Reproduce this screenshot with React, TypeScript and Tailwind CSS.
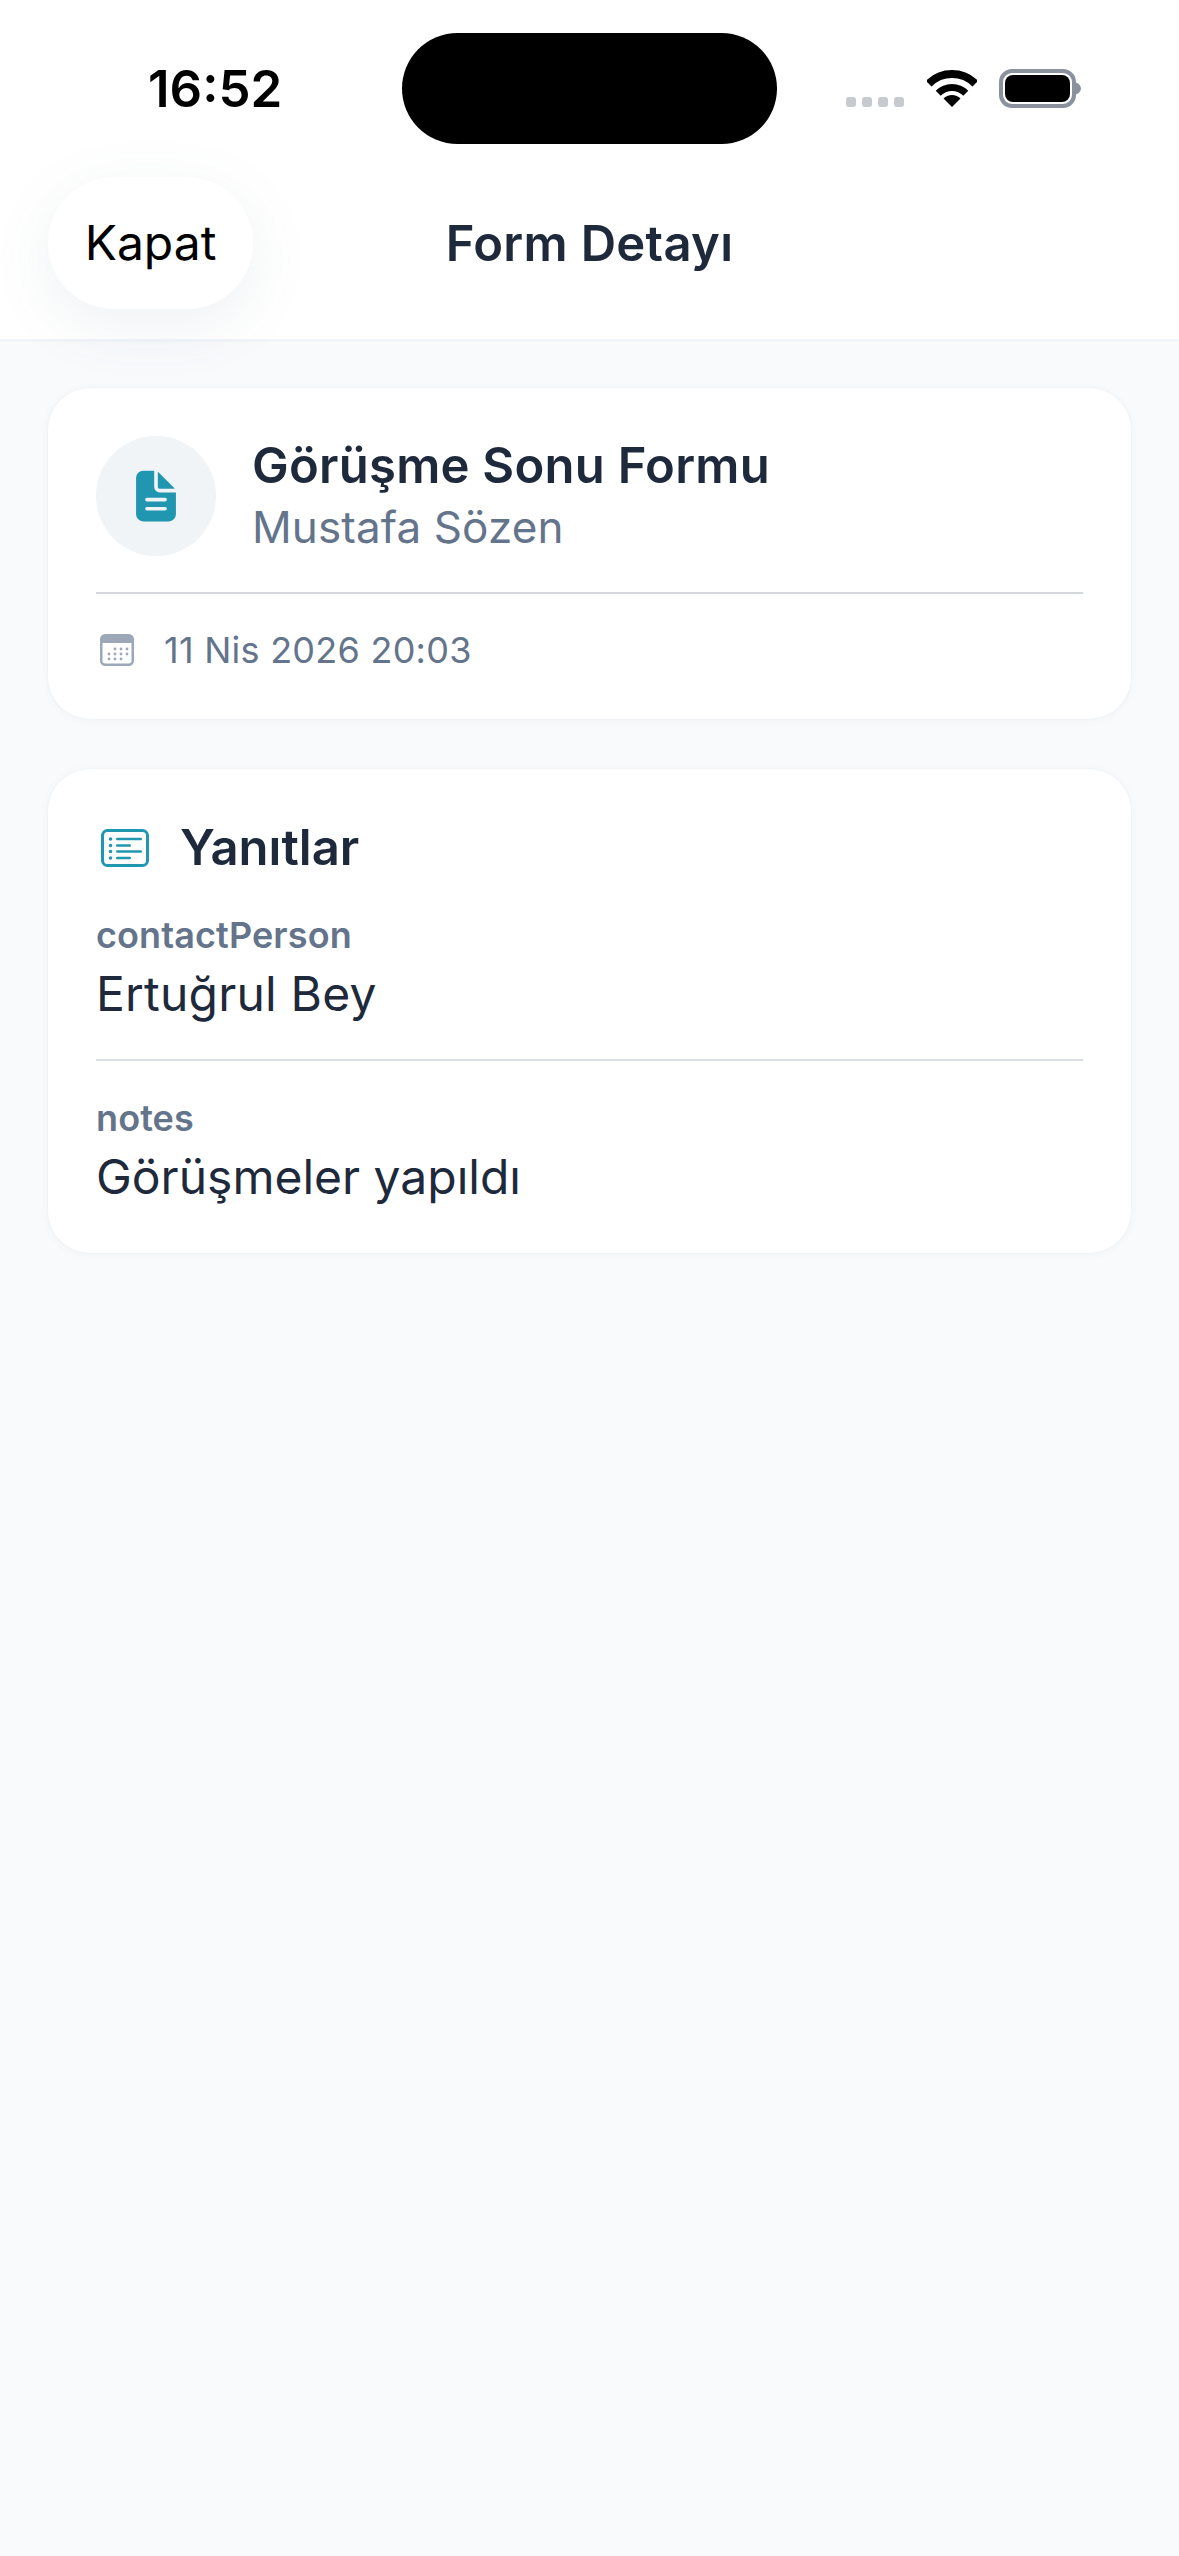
import React from "react";

function Wifi() {
  return (
    <svg width="50" height="37" viewBox="0 0 50 37" fill="none">
      <path d="M1.7 13.7A33 33 0 0 1 48.3 13.7" stroke="#000" strokeWidth="8" />
      <path d="M11.2 23.2A19.5 19.5 0 0 1 38.8 23.2" stroke="#000" strokeWidth="7" />
      <path d="M25 37L16.5 28.5A12 12 0 0 1 33.5 28.5Z" fill="#000" />
    </svg>
  );
}

function Battery() {
  return (
    <svg width="82" height="39" viewBox="0 0 82 39" fill="none">
      <rect x="2" y="2" width="73" height="35" rx="11" stroke="#8b929d" strokeWidth="4" />
      <rect x="6" y="6" width="65" height="27" rx="8" fill="#000" />
      <path d="M77 13.5C80 14.5 82 17 82 19.5C82 22 80 24.5 77 25.5Z" fill="#8b929d" />
    </svg>
  );
}

function DocIcon() {
  return (
    <svg width="58" height="58" viewBox="0 0 512 512" fill="#2196b0">
      <path d="M428 224H288a48 48 0 01-48-48V36a4 4 0 00-4-4h-92a64 64 0 00-64 64v320a64 64 0 0064 64h224a64 64 0 0064-64V228a4 4 0 00-4-4zm-92 160H176a16 16 0 010-32h160a16 16 0 010 32zm0-80H176a16 16 0 010-32h160a16 16 0 010 32z" />
      <path d="M419.22 188.59L275.41 44.78a2 2 0 00-3.41 1.41V176a16 16 0 0016 16h129.81a2 2 0 001.41-3.41z" />
    </svg>
  );
}

function CalendarIcon() {
  const dots: [number, number][] = [
    [15, 15], [21, 15], [27, 15],
    [9, 20], [15, 20], [21, 20], [27, 20],
    [9, 25], [15, 25], [21, 25],
  ];
  return (
    <svg width="34" height="32" viewBox="0 0 34 32" fill="none">
      <rect x="1.25" y="1.25" width="31.5" height="29.5" rx="4" stroke="#9ca8b8" strokeWidth="2.5" />
      <path d="M1 9V5a4 4 0 0 1 4-4h24a4 4 0 0 1 4 4v4Z" fill="#9ca8b8" />
      {dots.map(([x, y]) => (
        <circle key={`${x}-${y}`} cx={x} cy={y} r="1.4" fill="#9ca8b8" />
      ))}
    </svg>
  );
}

function ListIcon() {
  return (
    <svg width="48" height="38" viewBox="0 0 48 38" fill="none">
      <rect x="1.5" y="1.5" width="45" height="35" rx="5" stroke="#2196b0" strokeWidth="3" />
      <g fill="#2196b0">
        <circle cx="9.5" cy="10" r="1.8" />
        <circle cx="9.5" cy="16.5" r="1.8" />
        <circle cx="9.5" cy="22.5" r="1.8" />
        <circle cx="9.5" cy="29" r="1.8" />
        <rect x="15" y="8.8" width="26" height="2.4" rx="1.2" />
        <rect x="15" y="15.3" width="15" height="2.4" rx="1.2" />
        <rect x="15" y="21.3" width="26" height="2.4" rx="1.2" />
        <rect x="15" y="27.8" width="15" height="2.4" rx="1.2" />
      </g>
    </svg>
  );
}

export default function App() {
  return (
    <div className="flex min-h-[2556px] w-full flex-col bg-[#f8fafc] font-['Inter',sans-serif]">
      <header className="border-b-[3px] border-[#f1f5f9] bg-white">
        <div className="flex h-[177px] items-center">
          <div className="w-[402px] pl-[148px] text-[51px] leading-none font-semibold text-black">16:52</div>
          <div className="h-[111px] w-[375px] rounded-[56px] bg-black" />
          <div className="ml-[69px] flex items-end">
            <div className="mb-[1px] flex gap-[6px]">
              <span className="h-[10px] w-[10px] rounded-[3px] bg-[#c7cbd0]" />
              <span className="h-[10px] w-[10px] rounded-[3px] bg-[#c7cbd0]" />
              <span className="h-[10px] w-[10px] rounded-[3px] bg-[#c7cbd0]" />
              <span className="h-[10px] w-[10px] rounded-[3px] bg-[#c7cbd0]" />
            </div>
            <div className="mb-[1px] ml-[23px]"><Wifi /></div>
            <div className="ml-[22px]"><Battery /></div>
          </div>
        </div>
        <div className="grid grid-cols-[1fr_auto_1fr] items-center pb-[30px] pl-[48px]">
          <div className="flex">
            <button className="flex h-[132px] w-[205px] items-center justify-center rounded-[66px] bg-white text-[48px] leading-none text-black shadow-[0_16px_60px_rgba(100,116,139,0.10)]">
              Kapat
            </button>
          </div>
          <h1 className="-translate-x-[24px] text-[49px] leading-none font-semibold tracking-[0.3px] text-[#1e293b]">Form Detayı</h1>
          <div />
        </div>
      </header>

      <main className="flex flex-col gap-[50px] px-[48px] pt-[46px]">
        <section className="rounded-[42px] bg-white px-[48px] pt-[48px] pb-[46px] shadow-[0_1px_8px_rgba(100,116,139,0.06),0_0_0_1px_#f4f7fa]">
          <div className="flex items-center gap-[36px]">
            <div className="flex h-[120px] w-[120px] items-center justify-center rounded-full bg-[#f0f4f7]">
              <DocIcon />
            </div>
            <div className="flex flex-col">
              <div className="text-[49px] leading-[60px] font-semibold tracking-[0.25px] text-[#1e293b]">Görüşme Sonu Formu</div>
              <div className="mt-[3px] text-[44px] leading-[57px] tracking-[0.1px] text-[#64748b]">Mustafa Sözen</div>
            </div>
          </div>
          <div className="mt-[36px] flex items-center gap-[30px] border-t-[2px] border-[#d4d7dc] px-[4px] pt-[33px]">
            <CalendarIcon />
            <span className="text-[36px] leading-[46px] tracking-[0.25px] text-[#64748b]">11 Nis 2026 20:03</span>
          </div>
        </section>

        <section className="rounded-[42px] bg-white px-[48px] pt-[48px] pb-[45px] shadow-[0_1px_8px_rgba(100,116,139,0.06),0_0_0_1px_#f4f7fa]">
          <div className="flex items-center gap-[31px] pl-[5px]">
            <ListIcon />
            <h2 className="text-[49px] leading-[62px] font-semibold text-[#1e293b]">Yanıtlar</h2>
          </div>
          <div className="mt-[34px] border-b-[2px] border-[#dcdfe3] pb-[34px]">
            <div className="text-[36px] leading-[44px] font-semibold tracking-[0.1px] text-[#64748b]">contactPerson</div>
            <div className="mt-[6px] text-[48px] leading-[62px] tracking-[0.2px] text-[#1e293b]">Ertuğrul Bey</div>
          </div>
          <div className="mt-[35px]">
            <div className="text-[36px] leading-[44px] font-semibold tracking-[0.1px] text-[#64748b]">notes</div>
            <div className="mt-[6px] text-[48px] leading-[62px] text-[#1e293b]">Görüşmeler yapıldı</div>
          </div>
        </section>
      </main>
    </div>
  );
}
